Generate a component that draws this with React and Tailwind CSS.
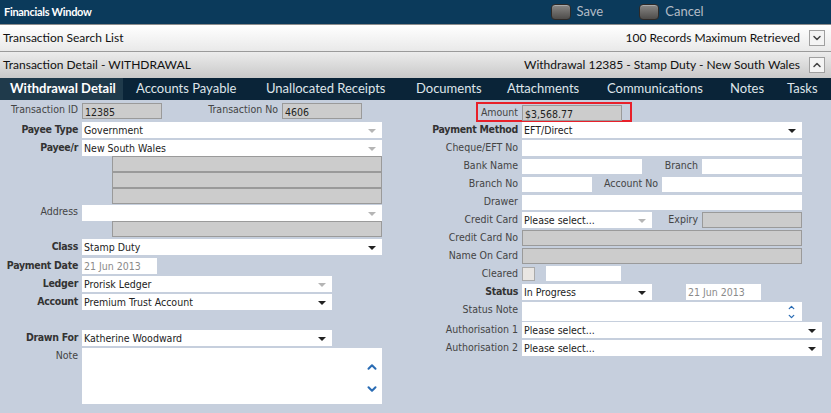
import { ChevronDown, ChevronUp } from 'lucide-react';

const FORM_FONT = { fontFamily: '"DejaVu Sans Condensed", "DejaVu Sans", sans-serif' };

function Arrow({ light }) {
  return (
    <span
      className={`absolute right-[6px] top-[7px] h-0 w-0 border-x-[4px] border-t-[4px] border-x-transparent ${
        light ? 'border-t-[#b5b5b5]' : 'border-t-[#222]'
      }`}
    />
  );
}

function Field({ w, h = 16, value = '', gray, select, light, dim, className = '' }) {
  return (
    <div
      className={`relative shrink-0 overflow-hidden whitespace-nowrap pl-[2px] text-[10.5px] leading-[16px] ${
        gray ? 'border border-[#9a9a9a] bg-[#cccccc] leading-[14px]' : 'bg-white'
      } ${dim ? 'text-[#8a8a8a]' : 'text-[#222]'} ${className}`}
      style={{ width: w, height: h }}
    >
      {value}
      {select && <Arrow light={light} />}
    </div>
  );
}

function Label({ w, bold, children }) {
  return (
    <div
      className={`shrink-0 whitespace-nowrap pr-[4px] text-right text-[10.5px] leading-[14px] ${
        bold ? 'font-bold tracking-[-0.3px] text-[#333]' : 'text-[#444]'
      }`}
      style={{ width: w }}
    >
      {children}
    </div>
  );
}

function Row({ h, children, className = '' }) {
  return (
    <div className={`flex items-start ${className}`} style={{ height: h }}>
      {children}
    </div>
  );
}

function Scroller({ small }) {
  return (
    <div className={`absolute flex flex-col items-center text-[#2a6cb4] ${small ? 'right-[6px] top-[1px] gap-0' : 'right-[3px] top-[12px] gap-[8px]'}`}>
      <ChevronUp size={small ? 9 : 14} strokeWidth={3.5} />
      <ChevronDown size={small ? 9 : 14} strokeWidth={3.5} />
    </div>
  );
}

function LeftColumn() {
  return (
    <div className="flex w-[410px] shrink-0 flex-col pt-[2px]">
      <Row h={20}>
        <Label w={82}>Transaction ID</Label>
        <Field w={80} gray value="12385" className="mt-[1px]" />
        <Label w={120}>Transaction No</Label>
        <Field w={80} gray value="4606" className="mt-[1px]" />
      </Row>
      <Row h={18}>
        <Label w={82} bold>Payee Type</Label>
        <Field w={300} select light value="Government" />
      </Row>
      <Row h={16}>
        <Label w={82} bold>Payee/r</Label>
        <Field w={300} select light value="New South Wales" />
      </Row>
      <Row h={16} className="pl-[112px]"><Field w={270} gray /></Row>
      <Row h={16} className="pl-[112px]"><Field w={270} gray /></Row>
      <Row h={16} className="pl-[112px]"><Field w={270} gray /></Row>
      <Row h={16}>
        <Label w={82}>Address</Label>
        <Field w={300} select light className="mt-[1px]" />
      </Row>
      <Row h={19} className="pl-[112px]"><Field w={270} gray className="mt-[1px]" /></Row>
      <Row h={19}>
        <Label w={82} bold>Class</Label>
        <Field w={300} select value="Stamp Duty" />
      </Row>
      <Row h={18}>
        <Label w={82} bold>Payment Date</Label>
        <Field w={75} dim value="21 Jun 2013" />
      </Row>
      <Row h={18}>
        <Label w={82} bold>Ledger</Label>
        <Field w={250} select light value="Prorisk Ledger" />
      </Row>
      <Row h={36}>
        <Label w={82} bold>Account</Label>
        <Field w={250} select value="Premium Trust Account" />
      </Row>
      <Row h={18}>
        <Label w={82} bold>Drawn For</Label>
        <Field w={250} select value="Katherine Woodward" />
      </Row>
      <Row h={56}>
        <Label w={82}>Note</Label>
        <div className="relative h-[56px] w-[300px] bg-white">
          <Scroller />
        </div>
      </Row>
    </div>
  );
}

function RightColumn() {
  return (
    <div className="flex flex-1 flex-col pt-[2px]">
      <Row h={20}>
        <div className="ml-[66px] flex h-[20px] w-fit shrink-0 items-start border-2 border-[#e8202a] pr-[8px] pt-[1px]">
          <Label w={44}>Amount</Label>
          <Field w={100} gray value="$3,568.77" />
        </div>
      </Row>
      <Row h={18}>
        <Label w={112} bold>Payment Method</Label>
        <Field w={280} select value="EFT/Direct" />
      </Row>
      <Row h={18}>
        <Label w={112}>Cheque/EFT No</Label>
        <Field w={280} />
      </Row>
      <Row h={18}>
        <Label w={112}>Bank Name</Label>
        <Field w={120} h={15} className="mt-[1px]" />
        <Label w={60}>Branch</Label>
        <Field w={100} h={15} className="mt-[1px]" />
      </Row>
      <Row h={18}>
        <Label w={112}>Branch No</Label>
        <Field w={70} h={15} className="mt-[1px]" />
        <Label w={70}>Account No</Label>
        <Field w={140} h={15} className="mt-[1px]" />
      </Row>
      <Row h={18}>
        <Label w={112}>Drawer</Label>
        <Field w={280} h={15} className="mt-[1px]" />
      </Row>
      <Row h={18}>
        <Label w={112}>Credit Card</Label>
        <Field w={130} select light value="Please select..." />
        <Label w={50}>Expiry</Label>
        <Field w={100} gray />
      </Row>
      <Row h={18}>
        <Label w={112}>Credit Card No</Label>
        <Field w={280} gray />
      </Row>
      <Row h={18}>
        <Label w={112}>Name On Card</Label>
        <Field w={280} gray />
      </Row>
      <Row h={18}>
        <Label w={112}>Cleared</Label>
        <div className="mt-[1px] h-[14px] w-[13px] shrink-0 border border-[#aaa] bg-[#e9e6e3]" />
        <Field w={75} h={15} className="ml-[11px]" />
      </Row>
      <Row h={18}>
        <Label w={112} bold>Status</Label>
        <Field w={130} select value="In Progress" />
        <Field w={75} dim value="21 Jun 2013" className="ml-[34px]" />
      </Row>
      <Row h={20}>
        <Label w={112}>Status Note</Label>
        <div className="relative h-[19px] w-[280px] bg-white">
          <Scroller small />
        </div>
      </Row>
      <Row h={18}>
        <Label w={112}>Authorisation 1</Label>
        <Field w={300} select value="Please select..." />
      </Row>
      <Row h={18}>
        <Label w={112}>Authorisation 2</Label>
        <Field w={300} select value="Please select..." />
      </Row>
    </div>
  );
}

function ToolButton({ label }) {
  return (
    <div className="flex items-center gap-[6px]">
      <div className="h-[16px] w-[20px] rounded-[4px] border border-[#2e2a28] bg-gradient-to-b from-[#8a8886] via-[#6c6a68] to-[#4e4c4a] shadow-[inset_0_1px_0_#aaa]" />
      <span className="text-[13px] text-[#b4bcc6]" style={{ fontFamily: 'Lato, sans-serif' }}>{label}</span>
    </div>
  );
}

function Collapse({ up }) {
  return (
    <div className="flex h-[16px] w-[16px] items-center justify-center border border-[#a0a0a0] bg-[#f4f4f4] text-[#444]">
      {up ? <ChevronUp size={12} strokeWidth={3} /> : <ChevronDown size={12} strokeWidth={3} />}
    </div>
  );
}

const TABS = [
  ['Withdrawal Detail', 123],
  ['Accounts Payable', 130],
  ['Unallocated Receipts', 150],
  ['Documents', 91],
  ['Attachments', 100],
  ['Communications', 123],
  ['Notes', 57],
  ['Tasks', 57],
];

export default function App() {
  return (
    <div className="flex h-[413px] w-[831px] flex-col overflow-hidden bg-[#c6cfdd]">
      {/* title bar */}
      <div className="flex h-[24px] shrink-0 items-center bg-[#0b3a5b] pl-[4px]">
        <span className="text-[11px] font-bold tracking-[-0.3px] text-white" style={{ fontFamily: 'Lato, sans-serif' }}>
          Financials Window
        </span>
        <div className="ml-[459px] flex gap-[36px]">
          <ToolButton label="Save" />
          <ToolButton label="Cancel" />
        </div>
      </div>

      {/* collapsible headers */}
      <div style={{ fontFamily: 'Lato, "Open Sans", sans-serif' }}>
        <div className="flex h-[27px] items-center justify-between border-t border-[#8c8c8c] bg-gradient-to-b from-white to-[#e9e9e9] pl-[3px] pr-[6px] text-[12px] text-[#111]">
          <span>Transaction Search List</span>
          <div className="flex items-center gap-[9px]">
            <span>100 Records Maximum Retrieved</span>
            <Collapse />
          </div>
        </div>
        <div className="flex h-[27px] items-center justify-between border-t border-[#9a9a9a] bg-gradient-to-b from-[#ececec] to-[#c9c9c9] pl-[3px] pr-[6px] text-[12px] text-[#111]">
          <span>Transaction Detail - WITHDRAWAL</span>
          <div className="flex items-center gap-[9px]">
            <span>Withdrawal 12385 - Stamp Duty - New South Wales</span>
            <Collapse up />
          </div>
        </div>
      </div>

      {/* tabs */}
      <div className="flex h-[22px] shrink-0 bg-[#0a2438] text-[13px]" style={{ fontFamily: 'Lato, sans-serif' }}>
        {TABS.map(([t, w], i) => (
          <div
            key={t}
            className={`flex items-center whitespace-nowrap ${i === 0 ? 'bg-[#1f3a4b] pl-[10px] font-bold text-white' : 'pl-[13px] text-[#dfe5ea]'}`}
            style={{ width: w }}
          >
            {t}
          </div>
        ))}
      </div>

      {/* form */}
      <div className="flex flex-1" style={FORM_FONT}>
        <LeftColumn />
        <RightColumn />
      </div>
    </div>
  );
}
